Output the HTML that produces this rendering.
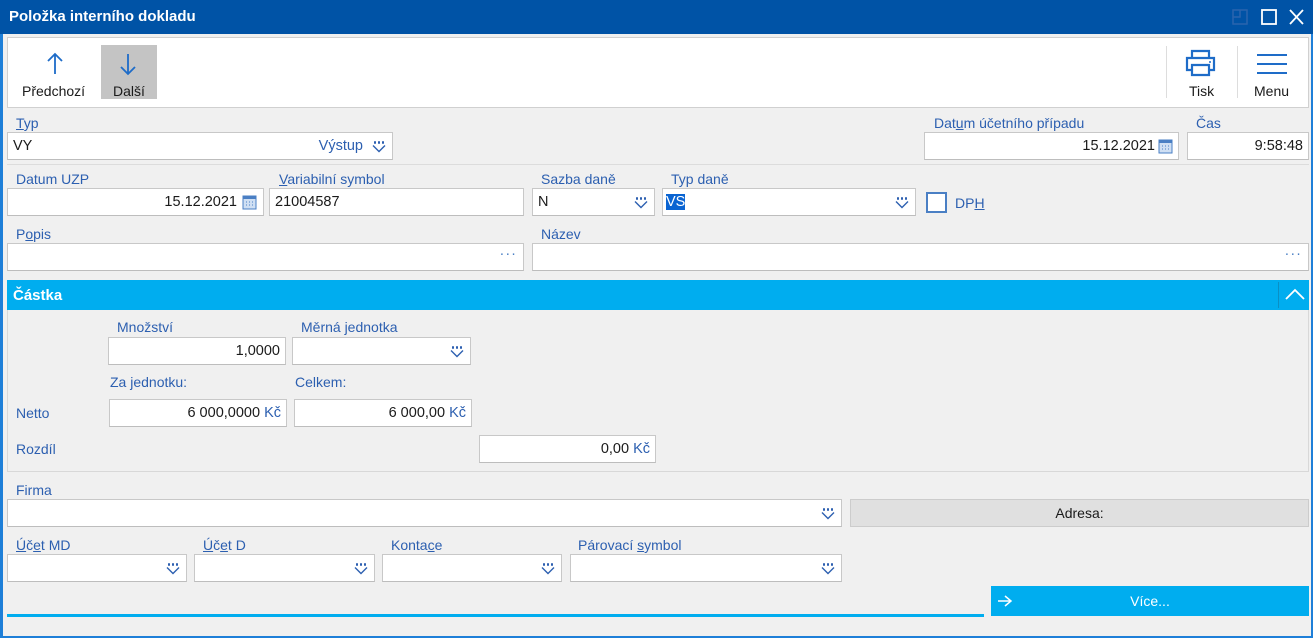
<!DOCTYPE html>
<html><head><meta charset="utf-8">
<style>
*{box-sizing:border-box;margin:0;padding:0}
body{width:1315px;height:638px;overflow:hidden;background:#fff;font-family:"Liberation Sans",sans-serif;font-size:14px;color:#1a1a1a;position:relative}
.a{position:absolute}
.win{left:0;top:0;width:1313px;height:638px;background:#f0f0f0;border-left:3px solid #1e7fd8;border-right:2px solid #1e7fd8;border-bottom:2px solid #1e7fd8}
.title{left:0;top:0;width:1313px;height:34px;background:#0053a6}
.tt{left:9px;top:8px;color:#fff;font-weight:bold;font-size:15px}
.lbl{color:#2c5fb0;font-size:14px}
.in{background:#fff;border:1px solid #c8c8c8;border-bottom-color:#bdbdbd;height:28px;line-height:26px;padding:0 5px;font-size:14.5px}
.r{text-align:right}
.dd{position:absolute;right:6px;top:7px;width:14px;height:13px}
.u{text-decoration:underline}
</style></head><body>
<div class="a win"></div>
<div class="a title"></div>
<div class="a tt">Položka interního dokladu</div>
<svg class="a" style="left:1225px;top:6px" width="90" height="22">
<rect x="8" y="4" width="14" height="14" fill="none" stroke="#2a64ad" stroke-width="1.5"/><path d="M8 11h7V4" fill="none" stroke="#2a64ad" stroke-width="1.5"/>
<rect x="37" y="4" width="14" height="14" fill="none" stroke="#fff" stroke-width="1.8"/>
<path d="M65 4l13 14M78 4L65 18" stroke="#fff" stroke-width="1.8"/>
</svg>
<div class="a" style="left:7px;top:37px;width:1302px;height:71px;background:#fff;border:1px solid #d0d0d0"></div>
<svg class="a" style="left:45px;top:52px" width="20" height="24"><path d="M10 2v20M3 9l7-7 7 7" fill="none" stroke="#1e6cc8" stroke-width="1.8"/></svg>
<div class="a" style="left:22px;top:83px;font-size:14px">Předchozí</div>
<div class="a" style="left:101px;top:45px;width:56px;height:54px;background:#c4c4c4"></div>
<svg class="a" style="left:118px;top:52px" width="20" height="24"><path d="M10 2v20M3 15l7 7 7-7" fill="none" stroke="#1e6cc8" stroke-width="1.8"/></svg>
<div class="a" style="left:113px;top:83px;font-size:14px">Další</div>
<div class="a" style="left:1166px;top:46px;width:1px;height:52px;background:#ddd"></div>
<div class="a" style="left:1237px;top:46px;width:1px;height:52px;background:#ddd"></div>
<svg class="a" style="left:1185px;top:49px" width="32" height="30"><path d="M7 9V2h17v7M7 21H2V9h27v12h-5M7 16h17v10H7z" fill="none" stroke="#1e6cc8" stroke-width="2.2"/><circle cx="25" cy="13" r="1" fill="#1e6cc8"/></svg>
<div class="a" style="left:1189px;top:83px">Tisk</div>
<svg class="a" style="left:1256px;top:53px" width="32" height="22"><path d="M1 2h30M1 11h30M1 20h30" stroke="#1e6cc8" stroke-width="2"/></svg>
<div class="a" style="left:1254px;top:83px">Menu</div>

<div class="a lbl" style="left:16px;top:115px"><span class="u">T</span>yp</div>
<div class="a in" style="left:7px;top:132px;width:386px;height:28px">VY<span style="position:absolute;right:29px;color:#2c5fb0">Výstup</span><svg class="dd" viewBox="0 0 14 13"><path d="M2 2.5h2M6 2.5h2M10 2.5h2" stroke="#2c5fb0" stroke-width="2.4"/><path d="M1 5.5l6 6 6-6" fill="none" stroke="#2c5fb0" stroke-width="1.4"/></svg></div>
<div class="a lbl" style="left:934px;top:115px">Dat<span class="u">u</span>m účetního případu</div>
<div class="a in r" style="left:924px;top:132px;width:255px;padding-right:23px">15.12.2021<svg style="position:absolute;right:5px;top:6px" width="15" height="15"><rect x="1" y="1" width="13" height="13" fill="#cfdff3" stroke="#4a7fc4"/><rect x="1" y="1" width="13" height="3" fill="#4a7fc4"/><path d="M4 7h1M7 7h1M10 7h1M4 10h1M7 10h1M10 10h1" stroke="#4a7fc4"/></svg></div>
<div class="a lbl" style="left:1196px;top:115px">Čas</div>
<div class="a in r" style="left:1187px;top:132px;width:122px">9:58:48</div>
<div class="a" style="left:7px;top:164px;width:1302px;height:1px;background:#dcdcdc"></div>

<div class="a lbl" style="left:16px;top:171px">Datum UZP</div>
<div class="a in r" style="left:7px;top:188px;width:257px;padding-right:26px">15.12.2021<svg style="position:absolute;right:6px;top:6px" width="15" height="15"><rect x="1" y="1" width="13" height="13" fill="#cfdff3" stroke="#4a7fc4"/><rect x="1" y="1" width="13" height="3" fill="#4a7fc4"/><path d="M4 7h1M7 7h1M10 7h1M4 10h1M7 10h1M10 10h1" stroke="#4a7fc4"/></svg></div>
<div class="a lbl" style="left:279px;top:171px"><span class="u">V</span>ariabilní symbol</div>
<div class="a in" style="left:269px;top:188px;width:255px">21004587</div>
<div class="a lbl" style="left:541px;top:171px">Sazba daně</div>
<div class="a in" style="left:532px;top:188px;width:123px">N<svg class="dd" viewBox="0 0 14 13"><path d="M2 2.5h2M6 2.5h2M10 2.5h2" stroke="#2c5fb0" stroke-width="2.4"/><path d="M1 5.5l6 6 6-6" fill="none" stroke="#2c5fb0" stroke-width="1.4"/></svg></div>
<div class="a lbl" style="left:671px;top:171px">Typ daně</div>
<div class="a in" style="left:662px;top:188px;width:254px;padding-left:3px"><span style="background:#0a64d2;color:#fff">VS</span><svg class="dd" viewBox="0 0 14 13"><path d="M2 2.5h2M6 2.5h2M10 2.5h2" stroke="#2c5fb0" stroke-width="2.4"/><path d="M1 5.5l6 6 6-6" fill="none" stroke="#2c5fb0" stroke-width="1.4"/></svg></div>
<div class="a" style="left:926px;top:192px;width:21px;height:21px;border:2px solid #4a7fc4;background:#fff"></div>
<div class="a lbl" style="left:955px;top:195px">DP<span class="u">H</span></div>

<div class="a lbl" style="left:16px;top:226px">P<span class="u">o</span>pis</div>
<div class="a in" style="left:7px;top:243px;width:517px"><span style="position:absolute;right:6px;top:-3px;color:#4a7fc4;letter-spacing:1px">···</span></div>
<div class="a lbl" style="left:541px;top:226px">Název</div>
<div class="a in" style="left:532px;top:243px;width:777px"><span style="position:absolute;right:6px;top:-3px;color:#4a7fc4;letter-spacing:1px">···</span></div>

<div class="a" style="left:7px;top:280px;width:1302px;height:30px;background:#00adef"></div>
<div class="a" style="left:13px;top:287px;color:#fff;font-weight:bold;font-size:15px">Částka</div>
<div class="a" style="left:1278px;top:282px;width:1px;height:26px;background:#0a8fc4"></div>
<svg class="a" style="left:1284px;top:286px" width="22" height="16"><path d="M2 13l9-9 9 9" fill="none" stroke="#fff" stroke-width="1.8"/></svg>
<div class="a" style="left:7px;top:310px;width:1302px;height:162px;border:1px solid #d8d8d8;border-top:none"></div>
<div class="a lbl" style="left:117px;top:319px">Množství</div>
<div class="a in r" style="left:108px;top:337px;width:178px">1,0000</div>
<div class="a lbl" style="left:301px;top:319px">Měrná jednotka</div>
<div class="a in" style="left:292px;top:337px;width:179px"><svg class="dd" viewBox="0 0 14 13"><path d="M2 2.5h2M6 2.5h2M10 2.5h2" stroke="#2c5fb0" stroke-width="2.4"/><path d="M1 5.5l6 6 6-6" fill="none" stroke="#2c5fb0" stroke-width="1.4"/></svg></div>
<div class="a lbl" style="left:110px;top:374px">Za jednotku:</div>
<div class="a lbl" style="left:295px;top:374px">Celkem:</div>
<div class="a lbl" style="left:16px;top:405px">Netto</div>
<div class="a in r" style="left:109px;top:399px;width:178px">6 000,0000 <span style="color:#2c5fb0">Kč</span></div>
<div class="a in r" style="left:294px;top:399px;width:178px">6 000,00 <span style="color:#2c5fb0">Kč</span></div>
<div class="a lbl" style="left:16px;top:441px">Rozdíl</div>
<div class="a in r" style="left:479px;top:435px;width:177px">0,00 <span style="color:#2c5fb0">Kč</span></div>

<div class="a lbl" style="left:16px;top:482px">Firma</div>
<div class="a in" style="left:7px;top:499px;width:835px"><svg class="dd" viewBox="0 0 14 13"><path d="M2 2.5h2M6 2.5h2M10 2.5h2" stroke="#2c5fb0" stroke-width="2.4"/><path d="M1 5.5l6 6 6-6" fill="none" stroke="#2c5fb0" stroke-width="1.4"/></svg></div>
<div class="a" style="left:850px;top:499px;width:459px;height:28px;background:#e0e0e0;border:1px solid #ccc;text-align:center;line-height:26px">Adresa:</div>

<div class="a lbl" style="left:16px;top:537px"><span class="u">Ú</span>č<span class="u">e</span>t MD</div>
<div class="a lbl" style="left:203px;top:537px"><span class="u">Ú</span>č<span class="u">e</span>t D</div>
<div class="a lbl" style="left:391px;top:537px">Konta<span class="u">c</span>e</div>
<div class="a lbl" style="left:578px;top:537px">Párovací <span class="u">s</span>ymbol</div>
<div class="a in" style="left:7px;top:554px;width:180px"><svg class="dd" viewBox="0 0 14 13"><path d="M2 2.5h2M6 2.5h2M10 2.5h2" stroke="#2c5fb0" stroke-width="2.4"/><path d="M1 5.5l6 6 6-6" fill="none" stroke="#2c5fb0" stroke-width="1.4"/></svg></div>
<div class="a in" style="left:194px;top:554px;width:181px"><svg class="dd" viewBox="0 0 14 13"><path d="M2 2.5h2M6 2.5h2M10 2.5h2" stroke="#2c5fb0" stroke-width="2.4"/><path d="M1 5.5l6 6 6-6" fill="none" stroke="#2c5fb0" stroke-width="1.4"/></svg></div>
<div class="a in" style="left:382px;top:554px;width:180px"><svg class="dd" viewBox="0 0 14 13"><path d="M2 2.5h2M6 2.5h2M10 2.5h2" stroke="#2c5fb0" stroke-width="2.4"/><path d="M1 5.5l6 6 6-6" fill="none" stroke="#2c5fb0" stroke-width="1.4"/></svg></div>
<div class="a in" style="left:570px;top:554px;width:272px"><svg class="dd" viewBox="0 0 14 13"><path d="M2 2.5h2M6 2.5h2M10 2.5h2" stroke="#2c5fb0" stroke-width="2.4"/><path d="M1 5.5l6 6 6-6" fill="none" stroke="#2c5fb0" stroke-width="1.4"/></svg></div>

<div class="a" style="left:7px;top:614px;width:977px;height:3px;background:#00adef"></div>
<div class="a" style="left:991px;top:586px;width:318px;height:30px;background:#00adef;color:#fff;text-align:center;line-height:30px">Více...</div>
<svg class="a" style="left:996px;top:593px" width="18" height="16"><path d="M2 8h13M9 3l6 5-6 5" fill="none" stroke="#fff" stroke-width="1.5"/></svg>
</body></html>
